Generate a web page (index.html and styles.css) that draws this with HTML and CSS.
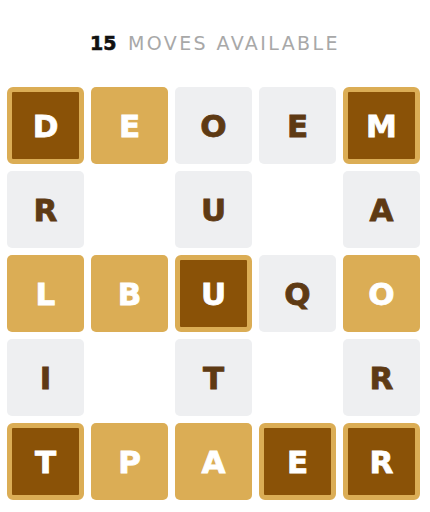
FILE: index.html
```html
<!DOCTYPE html>
<html lang="en">
<head>
    <meta charset="UTF-8">
    <meta name="viewport" content="width=device-width, initial-scale=1.0">
    <title>Moves</title>
    <link rel="stylesheet" href="styles.css">
</head>
<body>
    <h1 class="moves"><strong>15</strong> MOVES AVAILABLE</h1>

    <div class="board">
        <div class="tile dark">D</div>
        <div class="tile gold">E</div>
        <div class="tile grey">O</div>
        <div class="tile grey">E</div>
        <div class="tile dark">M</div>

        <div class="tile grey">R</div>
        <div class="tile empty"></div>
        <div class="tile grey">U</div>
        <div class="tile empty"></div>
        <div class="tile grey">A</div>

        <div class="tile gold">L</div>
        <div class="tile gold">B</div>
        <div class="tile dark">U</div>
        <div class="tile grey">Q</div>
        <div class="tile gold">O</div>

        <div class="tile grey">I</div>
        <div class="tile empty"></div>
        <div class="tile grey">T</div>
        <div class="tile empty"></div>
        <div class="tile grey">R</div>

        <div class="tile dark">T</div>
        <div class="tile gold">P</div>
        <div class="tile gold">A</div>
        <div class="tile dark">E</div>
        <div class="tile dark">R</div>
    </div>
</body>
</html>
```

FILE: styles.css
```css
body {
    margin: 0;
    padding: 0;
    background-color: #ffffff;
    font-family: 'DejaVu Sans', sans-serif;
}

.moves {
    margin: 0;
    padding-top: 31px;
    height: 56px;
    box-sizing: border-box;
    text-align: center;
    font-size: 19px;
    font-weight: normal;
    letter-spacing: 2.4px;
    color: #a8a8a8;
    line-height: 24px;
}

.moves strong {
    color: #111111;
    font-weight: 800;
    letter-spacing: 0;
    margin-right: 3px;
    -webkit-text-stroke: 0.6px #111111;
}

.board {
    display: grid;
    grid-template-columns: repeat(5, 77px);
    grid-auto-rows: 77px;
    gap: 7px;
    padding: 31px 7px 0 7px;
}

.tile {
    display: flex;
    align-items: center;
    justify-content: center;
    border-radius: 5px;
    box-sizing: border-box;
    font-size: 31px;
    font-weight: bold;
    -webkit-text-stroke: 0.8px currentColor;
}

.grey {
    background-color: #eeeff1;
    color: #5e3a14;
}

.gold {
    background-color: #dbad55;
    color: #ffffff;
}

.dark {
    background-color: #8a5207;
    border: 5px solid #dbad55;
    border-radius: 6px;
    color: #ffffff;
}

.empty {
    background: none;
}
```
